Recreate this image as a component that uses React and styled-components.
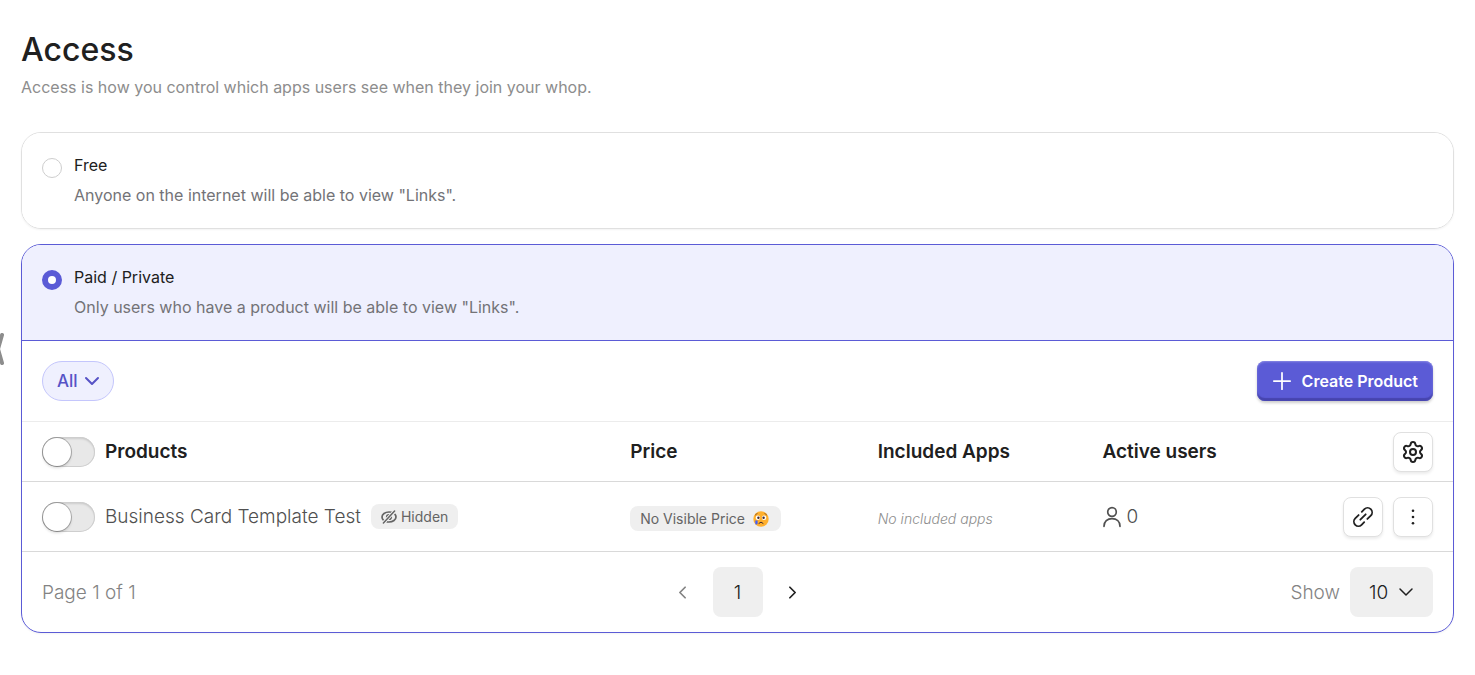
import React, { useState } from 'react';
import styled, { createGlobalStyle } from 'styled-components';
import { Settings, Plus, ChevronDown, ChevronLeft, ChevronRight } from 'lucide-react';

const GlobalStyle = createGlobalStyle`
  * {
    box-sizing: border-box;
  }

  body {
    margin: 0;
    background: white;
    color: #202020;
    font-family: Inter, 'Liberation Sans', sans-serif;
  }

  button, select, input {
    font: inherit;
    color: inherit;
    margin: 0;
  }
`;

const Page = styled.main`
  padding: 28px 21px;
`;

const DrawerHandle = styled.svg`
  position: fixed;
  left: 0;
  top: 333px;
  width: 4px;
  height: 32px;
`;

const Title = styled.h1`
  margin: 0;
  font-size: 32px;
  font-weight: 500;
  line-height: 44px;
`;

const Subtitle = styled.p`
  margin: 0 0 30px;
  color: #8d8d8d;
  font-size: 16px;
  line-height: 30px;
`;

const Options = styled.div`
  display: flex;
  flex-direction: column;
  gap: 15px;
`;

const Card = styled.section`
  border: 1px solid ${props => props.$active ? '#5b5bd6' : '#e0e0e0'};
  border-radius: 20px;
  overflow: hidden;
  box-shadow: 0 1px 2px rgba(0, 0, 0, 0.05);
`;

const OptionLabel = styled.label`
  display: flex;
  gap: 12px;
  padding: 17px 20px 18px;
  background: ${props => props.$active ? '#eff0fe' : 'white'};
  border-bottom: ${props => props.$active ? '1px solid #5b5bd6' : '0'};
  font-size: 16px;
  line-height: 30px;
  cursor: pointer;
`;

const Radio = styled.input`
  appearance: none;
  width: 20px;
  height: 20px;
  margin-top: 8px;
  flex-shrink: 0;
  border: 1px solid #cecece;
  border-radius: 50%;
  background: white;

  &:checked {
    border: 6px solid #5b5bd6;
  }
`;

const OptionText = styled.span`
  display: flex;
  flex-direction: column;
`;

const Description = styled.span`
  color: #737377;
`;

const Toolbar = styled.div`
  display: flex;
  align-items: center;
  justify-content: space-between;
  padding: 20px;
  border-bottom: 1px solid #ececec;
`;

const SelectBox = styled.span`
  position: relative;
  display: inline-flex;

  svg {
    position: absolute;
    right: ${props => props.$pill ? '10px' : '15px'};
    top: 0;
    bottom: 0;
    margin: auto 0;
    pointer-events: none;
  }
`;

const FilterSelect = styled.select`
  appearance: none;
  width: 72px;
  height: 40px;
  padding: 0 32px 0 14px;
  border: 1px solid #c4c6fc;
  border-radius: 20px;
  background: #eff0fe;
  color: #5753c6;
  font-size: 17px;
  font-weight: 500;
`;

const SizeSelect = styled.select`
  appearance: none;
  width: 83px;
  height: 50px;
  padding: 0 36px 0 19px;
  border: 0;
  border-radius: 8px;
  background: #efefef;
  color: #202020;
  font-size: 19px;
`;

const CreateButton = styled.button`
  display: flex;
  align-items: center;
  gap: 6px;
  height: 40px;
  padding: 0 15px 0 11px;
  border: 0;
  border-radius: 8px;
  background: #5b5bd6;
  box-shadow: inset 0 1px 2px #8a8ae4, inset 0 -3px 1px #4644ae, 0 2px 3px rgba(0, 0, 0, 0.2);
  color: white;
  font-size: 16px;
  font-weight: 600;
`;

const Table = styled.table`
  width: 100%;
  table-layout: fixed;
  border-collapse: separate;
  border-spacing: 0;
`;

const HeadCell = styled.th`
  width: ${props => props.$width};
  height: 60px;
  padding: 0;
  border-bottom: 1px solid #d9d9d9;
  text-align: left;
  font-size: 19px;
  font-weight: 600;

  &:first-child {
    padding-left: 20px;
  }

  &:last-child {
    padding-right: 20px;
  }
`;

const Cell = styled.td`
  height: 70px;
  padding: ${props => props.$low ? '4px 0 0' : '0'};
  border-bottom: 1px solid #d9d9d9;
  color: #505050;
  font-size: 19px;
  font-weight: 300;

  &:first-child {
    padding-left: 20px;
  }

  &:last-child {
    padding-right: 20px;
  }
`;

const Inline = styled.div`
  display: flex;
  align-items: center;
  justify-content: ${props => props.$end ? 'flex-end' : 'flex-start'};
  gap: ${props => props.$gap || 10}px;
`;

const Toggle = styled.input`
  appearance: none;
  width: 53px;
  height: 30px;
  flex-shrink: 0;
  border-radius: 15px;
  background: #e8e8e8;
  box-shadow: inset 0 0 0 1px #cecece, inset 0 2px 2px rgba(0, 0, 0, 0.12);
  cursor: pointer;

  &::before {
    content: '';
    display: block;
    width: 28px;
    height: 28px;
    margin: 1px;
    border-radius: 50%;
    background: white;
    box-shadow: 0 0 0 1px rgba(0, 0, 0, 0.25), 0 2px 3px rgba(0, 0, 0, 0.15);
  }

  &:checked {
    background: #5b5bd6;
  }

  &:checked::before {
    margin-left: 24px;
  }
`;

const Badge = styled.span`
  display: flex;
  align-items: center;
  gap: ${props => props.$gap}px;
  width: fit-content;
  height: 25px;
  padding: 0 ${props => props.$end}px 0 10px;
  border-radius: 8px;
  background: #efefef;
  color: #646464;
  font-size: 14px;
  font-weight: 400;
`;

const Muted = styled.em`
  display: block;
  color: #8d8d8d;
  font-size: 14px;
`;

const IconButton = styled.button`
  display: flex;
  align-items: center;
  justify-content: center;
  width: 40px;
  height: 40px;
  padding: 0;
  border: 1px solid #e0e0e0;
  border-radius: 8px;
  background: white;
  box-shadow: 0 2px 3px rgba(0, 0, 0, 0.08);
  color: #202020;
  cursor: pointer;
`;

const Footer = styled.footer`
  display: grid;
  grid-template-columns: 1fr auto 1fr;
  align-items: center;
  padding: 15px 20px;
  color: #838383;
  font-size: 19px;
  font-weight: 300;
`;

const Pager = styled.nav`
  display: flex;
  align-items: center;
  gap: 10px;
`;

const PageButton = styled.button`
  display: flex;
  align-items: center;
  justify-content: center;
  width: ${props => props.$current ? '50px' : '40px'};
  height: 50px;
  padding: 0;
  border: 0;
  border-radius: 8px;
  background: ${props => props.$current ? '#efefef' : 'transparent'};
  color: ${props => props.disabled ? '#838383' : '#202020'};
`;

const LinkIcon = () => (
    <svg width="24" height="24" viewBox="0 0 24 24" fill="none" stroke="currentColor" strokeWidth="1.8" strokeLinecap="round">
        <g transform="rotate(-45 12 12)">
            <path d="M9.2 16.5H5.5a4.5 4.5 0 0 1 0-9h4.8" />
            <path d="M14.8 7.5h3.7a4.5 4.5 0 0 1 0 9h-4.8" />
            <path d="M8.2 12h7.6" />
        </g>
    </svg>
);

const DotsIcon = () => (
    <svg width="20" height="20" viewBox="0 0 20 20" fill="currentColor">
        <circle cx="10" cy="3.8" r="1.3" />
        <circle cx="10" cy="10" r="1.3" />
        <circle cx="10" cy="16.2" r="1.3" />
    </svg>
);

const UserIcon = () => (
    <svg width="20" height="22" viewBox="0 0 20 22" fill="none" stroke="currentColor" strokeWidth="1.7" strokeLinecap="round">
        <circle cx="10" cy="6" r="4.3" />
        <path d="M2 20.3c0-4.7 3.4-7.6 8-7.6s8 2.9 8 7.6" />
    </svg>
);

const HiddenIcon = () => (
    <svg width="16" height="14" viewBox="0 0 16 14" fill="none" stroke="currentColor" strokeWidth="1.7" strokeLinecap="round">
        <path d="M2.6 10.4C1.6 9.5 1 8.2 1 7c0-2.6 3-5 7-5 .9 0 1.7.1 2.4.3" />
        <path d="M14 4.4c.7.8 1 1.7 1 2.6 0 2.6-3 5-7 5-.7 0-1.3-.1-1.9-.2" />
        <circle cx="8" cy="7" r="3.1" fill="currentColor" stroke="none" />
        <path d="M13.6 1L2.4 13" stroke="#efefef" strokeWidth="3.4" />
        <path d="M13.6 1L2.4 13" strokeWidth="1.5" />
    </svg>
);

const SadFace = () => (
    <svg width="16" height="16" viewBox="0 0 16 16">
        <circle cx="8" cy="8" r="7.7" fill="#ffb02e" />
        <path d="M2.2 4.1Q3.5 3.5 4.3 2.2M11.7 2.2Q12.5 3.5 13.8 4.1" fill="none" stroke="#6b3c1f" strokeWidth=".8" />
        <circle cx="4.9" cy="6.8" r="2.2" fill="white" />
        <circle cx="11.1" cy="6.8" r="2.2" fill="white" />
        <circle cx="5.4" cy="6.8" r="1.2" fill="#402a32" />
        <circle cx="10.6" cy="6.8" r="1.2" fill="#402a32" />
        <path d="M5.9 12.3Q8 9.7 10.1 12.3" fill="none" stroke="#402a32" strokeWidth="1" strokeLinecap="round" />
        <path d="M2.3 9.5h2.3v3q0 1-1.15 1t-1.15-1z" fill="#3f5fff" />
    </svg>
);

const AccessOption = ({ value, title, text, access, onChange }) => (
    <OptionLabel $active={access === value}>
        <Radio type="radio" name="access" value={value} checked={access === value} onChange={() => onChange(value)} />
        <OptionText>
            <span>{title}</span>
            <Description>{text}</Description>
        </OptionText>
    </OptionLabel>
);

const Products = () => (
    <Table>
        <thead>
            <tr>
                <HeadCell $width="42.5%">
                    <Inline>
                        <Toggle type="checkbox" id="all-products" />
                        <label htmlFor="all-products">Products</label>
                    </Inline>
                </HeadCell>
                <HeadCell $width="17.3%">Price</HeadCell>
                <HeadCell $width="15.7%">Included Apps</HeadCell>
                <HeadCell>Active users</HeadCell>
                <HeadCell>
                    <Inline $end>
                        <IconButton aria-label="Table settings"><Settings size={24} strokeWidth={2} /></IconButton>
                    </Inline>
                </HeadCell>
            </tr>
        </thead>
        <tbody>
            <tr>
                <Cell>
                    <Inline>
                        <Toggle type="checkbox" id="product-1" />
                        <label htmlFor="product-1">Business Card Template Test</label>
                        <Badge $gap={4} $end={10}><HiddenIcon />Hidden</Badge>
                    </Inline>
                </Cell>
                <Cell $low><Badge $gap={8} $end={12}>No Visible Price<SadFace /></Badge></Cell>
                <Cell $low><Muted>No included apps</Muted></Cell>
                <Cell><Inline $gap={4}><UserIcon />0</Inline></Cell>
                <Cell>
                    <Inline $end>
                        <IconButton aria-label="Copy link"><LinkIcon /></IconButton>
                        <IconButton aria-label="More actions"><DotsIcon /></IconButton>
                    </Inline>
                </Cell>
            </tr>
        </tbody>
    </Table>
);

const App = () => {
    const [access, setAccess] = useState('paid');
    return (
        <Page>
            <GlobalStyle />
            <DrawerHandle viewBox="0 0 4 32" fill="none" stroke="#8d8d8d" strokeWidth="4" strokeLinecap="round">
                <path d="M2 2L-2 16L2 30" />
            </DrawerHandle>
            <Title>Access</Title>
            <Subtitle>Access is how you control which apps users see when they join your whop.</Subtitle>
            <Options>
                <Card $active={access === 'free'}>
                    <AccessOption
                        value="free"
                        title="Free"
                        text={'Anyone on the internet will be able to view "Links".'}
                        access={access}
                        onChange={setAccess}
                    />
                </Card>
                <Card $active={access === 'paid'}>
                    <AccessOption
                        value="paid"
                        title="Paid / Private"
                        text={'Only users who have a product will be able to view "Links".'}
                        access={access}
                        onChange={setAccess}
                    />
                    <Toolbar>
                        <SelectBox $pill>
                            <FilterSelect aria-label="Filter"><option>All</option></FilterSelect>
                            <ChevronDown size={24} color="#5753c6" strokeWidth={2} />
                        </SelectBox>
                        <CreateButton><Plus size={28} strokeWidth={1.5} />Create Product</CreateButton>
                    </Toolbar>
                    <Products />
                    <Footer>
                        <span>Page 1 of 1</span>
                        <Pager aria-label="Pagination">
                            <PageButton disabled aria-label="Previous page"><ChevronLeft size={21} /></PageButton>
                            <PageButton $current>1</PageButton>
                            <PageButton aria-label="Next page"><ChevronRight size={21} /></PageButton>
                        </Pager>
                        <Inline $end>
                            <label htmlFor="page-size">Show</label>
                            <SelectBox>
                                <SizeSelect id="page-size"><option>10</option></SizeSelect>
                                <ChevronDown size={24} color="#202020" strokeWidth={1.5} />
                            </SelectBox>
                        </Inline>
                    </Footer>
                </Card>
            </Options>
        </Page>
    );
};

export default App;
